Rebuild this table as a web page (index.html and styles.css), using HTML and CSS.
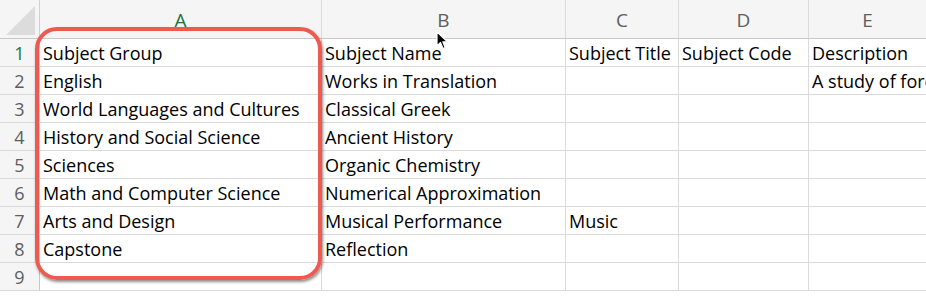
FILE: index.html
```html
<!DOCTYPE html>
<html>
<head>
<meta charset="utf-8">
<link rel="stylesheet" href="styles.css">
</head>
<body>
<div class="sheet">
  <div class="grid">
    <div class="corner"><span class="tri"></span></div>
    <div class="ch sel">A</div>
    <div class="ch">B</div>
    <div class="ch">C</div>
    <div class="ch">D</div>
    <div class="ch last">E</div>

    <div class="rh sel">1</div><div class="c">Subject Group</div><div class="c">Subject Name</div><div class="c">Subject Title</div><div class="c">Subject Code</div><div class="c last">Description</div>
    <div class="rh">2</div><div class="c">English</div><div class="c">Works in Translation</div><div class="c"></div><div class="c"></div><div class="c last">A study of foreign literature</div>
    <div class="rh">3</div><div class="c">World Languages and Cultures</div><div class="c">Classical Greek</div><div class="c"></div><div class="c"></div><div class="c last"></div>
    <div class="rh">4</div><div class="c">History and Social Science</div><div class="c">Ancient History</div><div class="c"></div><div class="c"></div><div class="c last"></div>
    <div class="rh">5</div><div class="c">Sciences</div><div class="c">Organic Chemistry</div><div class="c"></div><div class="c"></div><div class="c last"></div>
    <div class="rh">6</div><div class="c">Math and Computer Science</div><div class="c">Numerical Approximation</div><div class="c"></div><div class="c"></div><div class="c last"></div>
    <div class="rh">7</div><div class="c">Arts and Design</div><div class="c">Musical Performance</div><div class="c">Music</div><div class="c"></div><div class="c last"></div>
    <div class="rh">8</div><div class="c">Capstone</div><div class="c">Reflection</div><div class="c"></div><div class="c"></div><div class="c last"></div>
    <div class="rh">9</div><div class="c"></div><div class="c"></div><div class="c"></div><div class="c"></div><div class="c last"></div>
  </div>
  <div class="highlight"></div>
  <svg class="cursor" width="14" height="20" viewBox="0 0 14 20">
    <path d="M1 1 L1 15 L4.5 11.5 L7 17.5 L9.2 16.6 L6.8 10.8 L11.5 10.8 Z" fill="#000" stroke="#fff" stroke-width="1.2" stroke-linejoin="round"/>
  </svg>
</div>
</body>
</html>
```
FILE: styles.css
```css
html, body {
  margin: 0;
  padding: 0;
  background: #fff;
}
.sheet {
  position: relative;
  width: 926px;
  height: 297px;
  overflow: hidden;
  font-family: "Open Sans", "Liberation Sans", sans-serif;
}
.grid {
  display: grid;
  width: 926px;
  grid-template-columns: 40px 282px 244px 113px 130px minmax(0, 1fr);
  grid-template-rows: 39px repeat(9, 28px);
}
.grid > div {
  box-sizing: border-box;
  border-right: 1px solid #dadada;
  border-bottom: 1px solid #dadada;
}
.corner {
  background: #f5f5f5;
  border-right-color: #d0d0d0 !important;
  border-bottom-color: #c8c8c8 !important;
  position: relative;
}
.tri {
  position: absolute;
  right: 4px;
  bottom: 3px;
  width: 0;
  height: 0;
  border-left: 29px solid transparent;
  border-bottom: 29px solid #dcdcdc;
}
.ch {
  background: #f5f5f5;
  border-bottom-color: #c8c8c8 !important;
  color: #5e5e5e;
  font-size: 19px;
  display: flex;
  align-items: center;
  justify-content: center;
  padding-top: 1px;
}
.rh {
  background: #f5f5f5;
  border-right-color: #c8c8c8 !important;
  color: #5e5e5e;
  font-size: 18px;
  display: flex;
  align-items: center;
  justify-content: center;
}
.sel {
  color: #1e7145;
}
.c {
  font-size: 18px;
  color: #000;
  padding-left: 3px;
  display: flex;
  align-items: center;
  white-space: nowrap;
  overflow: hidden;
}
.c.last {
  border-right: none !important;
  overflow: visible;
}
.ch.last {
  border-right: none !important;
}
.highlight {
  position: absolute;
  left: 35px;
  top: 27px;
  width: 287px;
  height: 253px;
  box-sizing: border-box;
  border: 4px solid #ef5a50;
  border-radius: 22px;
  box-shadow: 1px 2px 3px rgba(0, 0, 0, 0.45);
}
.cursor {
  position: absolute;
  left: 436px;
  top: 31px;
}
```
